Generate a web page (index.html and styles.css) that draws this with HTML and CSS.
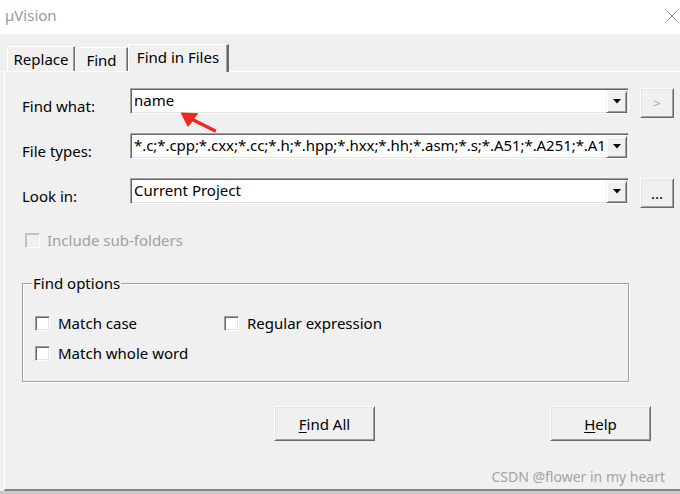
FILE: index.html
```html
<!DOCTYPE html>
<html>
<head>
<meta charset="utf-8">
<link rel="stylesheet" href="styles.css">
</head>
<body>
<div class="window">
  <div class="titlebar">
    <span class="title">µVision</span>
    <svg class="close" width="12" height="12" viewBox="0 0 12 12"><path d="M0.5 0.5 L11.5 11.5 M11.5 0.5 L0.5 11.5" stroke="#8a8a8a" stroke-width="1" fill="none"/></svg>
  </div>
  <div class="tabs">
    <div class="tab tab-replace">Replace</div>
    <div class="tab tab-find">Find</div>
    <div class="tab tab-active">Find in Files</div>
  </div>
  <div class="panel">
    <div class="form">
      <label class="label">Find what:</label>
      <div class="combo">
        <span class="combo-text">name</span>
        <span class="drop"><svg width="8" height="5" viewBox="0 0 8 5"><path d="M0 0 H8 L4 4.5 Z" fill="#000"/></svg></span>
      </div>
      <div class="btn small disabled">&gt;</div>

      <label class="label">File types:</label>
      <div class="combo">
        <span class="combo-text tight">*.c;*.cpp;*.cxx;*.cc;*.h;*.hpp;*.hxx;*.hh;*.asm;*.s;*.A51;*.A251;*.A1</span>
        <span class="drop"><svg width="8" height="5" viewBox="0 0 8 5"><path d="M0 0 H8 L4 4.5 Z" fill="#000"/></svg></span>
      </div>
      <div></div>

      <label class="label">Look in:</label>
      <div class="combo">
        <span class="combo-text">Current Project</span>
        <span class="drop"><svg width="8" height="5" viewBox="0 0 8 5"><path d="M0 0 H8 L4 4.5 Z" fill="#000"/></svg></span>
      </div>
      <div class="btn small">...</div>
    </div>

    <div class="check-row sub">
      <span class="box disabled-box"></span>
      <span class="check-label disabled-text">Include sub-folders</span>
    </div>

    <fieldset class="group">
      <legend class="legend">Find options</legend>
      <div class="options">
        <div class="check-row"><span class="box"></span><span class="check-label">Match case</span></div>
        <div class="check-row"><span class="box"></span><span class="check-label">Regular expression</span></div>
        <div class="check-row"><span class="box"></span><span class="check-label">Match whole word</span></div>
      </div>
    </fieldset>

    <div class="buttons">
      <div class="btn big"><span class="u">F</span>ind All</div>
      <div class="btn big"><span class="u">H</span>elp</div>
    </div>

    <div class="watermark">CSDN @flower in my heart</div>

    <svg class="arrow" width="40" height="24" viewBox="180 110 40 24">
      <path d="M180.5 112.5 L198.5 113.2 L194.2 118.6 L216.5 129.8 L215.2 132.8 L192.6 121.6 L187.8 127 Z" fill="#f0271c"/>
    </svg>
  </div>
  <div class="bottom-strip"></div>
</div>
</body>
</html>
```

FILE: styles.css
```css
* { box-sizing: border-box; }
html, body { margin: 0; padding: 0; }
body {
  width: 680px;
  height: 494px;
  overflow: hidden;
  background: #f0f0f0;
  font-family: "Noto Sans", "Liberation Sans", sans-serif;
  font-size: 15px;
  color: #000;
}
.window {
  display: flex;
  flex-direction: column;
  height: 494px;
}
.titlebar {
  height: 34px;
  flex: none;
  background: #fff;
  display: flex;
  align-items: center;
  justify-content: space-between;
  padding: 0 2px 4px 5px;
}
.title {
  color: #9a9a9a;
  font-size: 15px;
  line-height: 20px;
}
.close { margin-top: 2px; }

.tabs {
  height: 37px;
  flex: none;
  display: flex;
  align-items: flex-end;
  padding-left: 7px;
  background: #efefef;
}
.tab {
  line-height: 20px;
  text-align: center;
  background: #f0f0f0;
  border-top: 1px solid #fff;
  border-left: 1px solid #fff;
  border-right: 1px solid #696969;
  box-shadow: inset -1px 0 0 #a0a0a0;
  padding-top: 2px;
}
.tab-replace { width: 68px; height: 25px; }
.tab-find { width: 53px; height: 24px; }
.tab-active {
  width: 101px;
  height: 28px;
  margin-bottom: -1px;
  position: relative;
  z-index: 1;
  padding-top: 2px;
  border-right-width: 2px;
}

.panel {
  flex: 1;
  position: relative;
  border-top: 1px solid #fff;
  border-left: 1px solid #fff;
  border-bottom: 2px solid #858585;
  margin-left: 4px;
  padding: 16px 0 0 17px;
  display: flex;
  flex-direction: column;
}
.bottom-strip {
  height: 3px;
  flex: none;
  background: #c9c9c9;
}

.form {
  display: grid;
  grid-template-columns: 97px 499px 34px;
  grid-auto-rows: 30px;
  column-gap: 11px;
  row-gap: 15px;
  align-items: start;
}
.label {
  line-height: 20px;
  margin-top: 8px;
}
.combo {
  height: 26px;
  background: #fff;
  border-top: 1px solid #a0a0a0;
  border-left: 1px solid #a0a0a0;
  border-right: 1px solid #fff;
  border-bottom: 1px solid #fff;
  box-shadow: inset 1px 1px 0 #696969, inset -1px -1px 0 #e3e3e3;
  display: flex;
  align-items: center;
  padding: 1px 1px 1px 3px;
}
.combo-text {
  flex: 1;
  white-space: nowrap;
  overflow: hidden;
  line-height: 20px;
  margin-top: -2px;
}
.combo-text.tight { letter-spacing: -0.06px; }
.drop {
  width: 21px;
  height: 22px;
  flex: none;
  margin-top: 1px;
  background: #f0f0f0;
  border-top: 1px solid #f0f0f0;
  border-left: 1px solid #f0f0f0;
  border-right: 1px solid #696969;
  border-bottom: 1px solid #696969;
  box-shadow: inset 1px 1px 0 #fff, inset -1px -1px 0 #a0a0a0;
  display: flex;
  align-items: center;
  justify-content: center;
}

.btn {
  background: #f0f0f0;
  border-top: 1px solid #fff;
  border-left: 1px solid #fff;
  border-right: 1px solid #696969;
  border-bottom: 1px solid #696969;
  box-shadow: inset 1px 1px 0 #e3e3e3, inset -1px -1px 0 #a0a0a0;
  display: flex;
  align-items: center;
  justify-content: center;
}
.btn.small {
  width: 34px;
  height: 30px;
  line-height: 20px;
}
.btn.disabled { color: #a0a0a0; font-size: 13px; }

.check-row {
  display: flex;
  align-items: center;
  height: 20px;
}
.box {
  width: 15px;
  height: 15px;
  flex: none;
  background: #fff;
  border-top: 1px solid #a0a0a0;
  border-left: 1px solid #a0a0a0;
  border-right: 1px solid #fff;
  border-bottom: 1px solid #fff;
  box-shadow: inset 1px 1px 0 #696969, inset -1px -1px 0 #e3e3e3;
  margin-top: 1px;
}
.check-label {
  margin-left: 8px;
  line-height: 20px;
}
.sub {
  margin-top: 22px;
  margin-left: 3px;
}
.disabled-box {
  background: #f0f0f0;
  box-shadow: inset 1px 1px 0 #c0c0c0;
  border-top-color: #c0c0c0;
  border-left-color: #c0c0c0;
}
.check-label.disabled-text {
  color: #a0a0a0;
  margin-left: 7px;
}

.group {
  margin: 23px 0 0 0;
  width: 607px;
  border: 1px solid #a0a0a0;
  box-shadow: inset 1px 1px 0 #fff, 1px 1px 0 #fff;
  padding: 20px 12px 18px 12px;
  min-width: 0;
}
.legend {
  padding: 0 1px;
  margin-left: -3px;
  line-height: 20px;
  background: #f0f0f0;
}
.options {
  display: grid;
  grid-template-columns: 189px 1fr;
  row-gap: 10px;
}

.buttons {
  display: flex;
  margin-top: 24px;
  margin-left: 252px;
  gap: 175px;
}
.btn.big {
  width: 101px;
  height: 35px;
  line-height: 20px;
}
.u { text-decoration: underline; text-underline-offset: 2px; }

.watermark {
  margin-top: 26px;
  align-self: flex-end;
  margin-right: 15px;
  color: #a3a3a3;
  font-size: 14px;
  line-height: 20px;
}

.arrow {
  position: absolute;
  left: 175px;
  top: 38px;
}
```
